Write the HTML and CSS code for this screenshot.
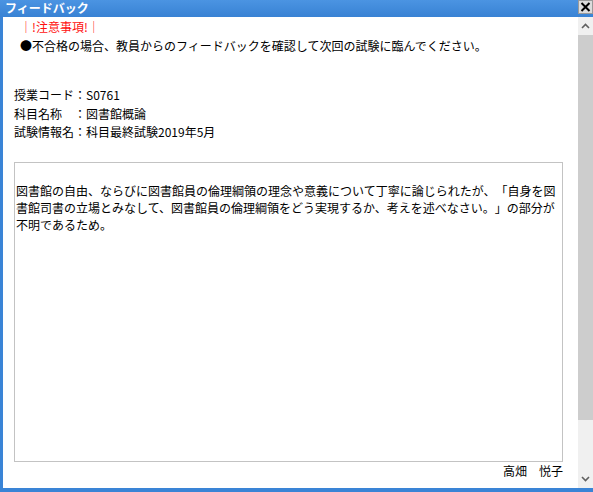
FILE: index.html
```html
<!DOCTYPE html>
<html lang="ja">
<head>
    <meta charset="UTF-8">
    <title>フィードバック</title>
    <link rel="stylesheet" href="styles.css">
</head>
<body>

<div class="FeedbackWindow">
    <div class="TitleBar">
        <span class="TitleText">フィードバック</span>
        <div class="CloseButton">
            <svg width="11" height="10" viewBox="0 0 11 10">
                <path d="M1.5 1 L9.5 9 M9.5 1 L1.5 9" stroke="#000" stroke-width="2" fill="none"/>
            </svg>
        </div>
    </div>

    <div class="WindowBody">
        <div class="ContentArea">
            <!-- notice -->
            <div class="NoticeBlock">
                <div class="NoticeTitle">｜!注意事項!｜</div>
                <div>●不合格の場合、教員からのフィードバックを確認して次回の試験に臨んでください。</div>
            </div>

            <!-- subject info -->
            <div class="InfoBlock">
                <div>授業コード：S0761</div>
                <div>科目名称　：図書館概論</div>
                <div>試験情報名：科目最終試験2019年5月</div>
            </div>

            <div class="CommentBox">図書館の自由、ならびに図書館員の倫理綱領の理念や意義について丁寧に論じられたが、「自身を図書館司書の立場とみなして、図書館員の倫理綱領をどう実現するか、考えを述べなさい。」の部分が不明であるため。</div>

            <div class="TeacherName">高畑　悦子</div>
        </div>

        <div class="ScrollBar">
            <div class="ScrollArrow">
                <svg width="9" height="6" viewBox="0 0 9 6">
                    <path d="M1 5 L4.5 1.5 L8 5" stroke="#606060" stroke-width="1.6" fill="none"/>
                </svg>
            </div>
            <div class="ScrollThumb"></div>
            <div class="ScrollTrack"></div>
            <div class="ScrollArrow">
                <svg width="9" height="6" viewBox="0 0 9 6">
                    <path d="M1 1 L4.5 4.5 L8 1" stroke="#606060" stroke-width="1.6" fill="none"/>
                </svg>
            </div>
        </div>
    </div>
</div>

</body>
</html>
```

FILE: styles.css
```css
body {
    margin: 0;
    font-family: "Noto Sans CJK JP", "Liberation Sans", sans-serif;
    font-size: 12px;
    color: #000;
    background-color: #fff;
    text-spacing-trim: space-all;
}

.FeedbackWindow {
    width: 593px;
    height: 492px;
    display: flex;
    flex-direction: column;
    background-color: #3a84d6;
    overflow: hidden;
}

.TitleBar {
    height: 17px;
    display: flex;
    align-items: flex-start;
    justify-content: space-between;
    background: linear-gradient(#4b94e2, #3882d4);
}

.TitleText {
    color: #fff;
    font-weight: bold;
    font-size: 12px;
    line-height: 16px;
    padding-left: 5px;
}

.CloseButton {
    width: 13px;
    height: 12px;
    background-color: #dcdcdc;
    border: 1px solid #9a9a9a;
    display: flex;
    align-items: center;
    justify-content: center;
}

.WindowBody {
    flex: 1;
    display: flex;
    margin-left: 3px;
    margin-bottom: 4px;
    background-color: #fff;
}

.ContentArea {
    flex: 1;
    padding: 0 15px 0 11px;
}

.NoticeBlock {
    padding-left: 6px;
    line-height: 19px;
}

.NoticeTitle {
    color: #ff1010;
}

.InfoBlock {
    margin-top: 31px;
    line-height: 18.5px;
}

.CommentBox {
    margin-top: 20px;
    height: 279px;
    border: 1px solid #c3c3c3;
    padding: 19px 1px 0 1px;
    line-height: 17px;
}

.TeacherName {
    text-align: right;
    line-height: 17px;
}

.ScrollBar {
    width: 15px;
    display: flex;
    flex-direction: column;
    background-color: #f0f0f0;
}

.ScrollArrow {
    height: 18px;
    display: flex;
    align-items: center;
    justify-content: center;
}

.ScrollThumb {
    height: 385px;
    background-color: #cdcdcd;
}

.ScrollTrack {
    flex: 1;
}
```
